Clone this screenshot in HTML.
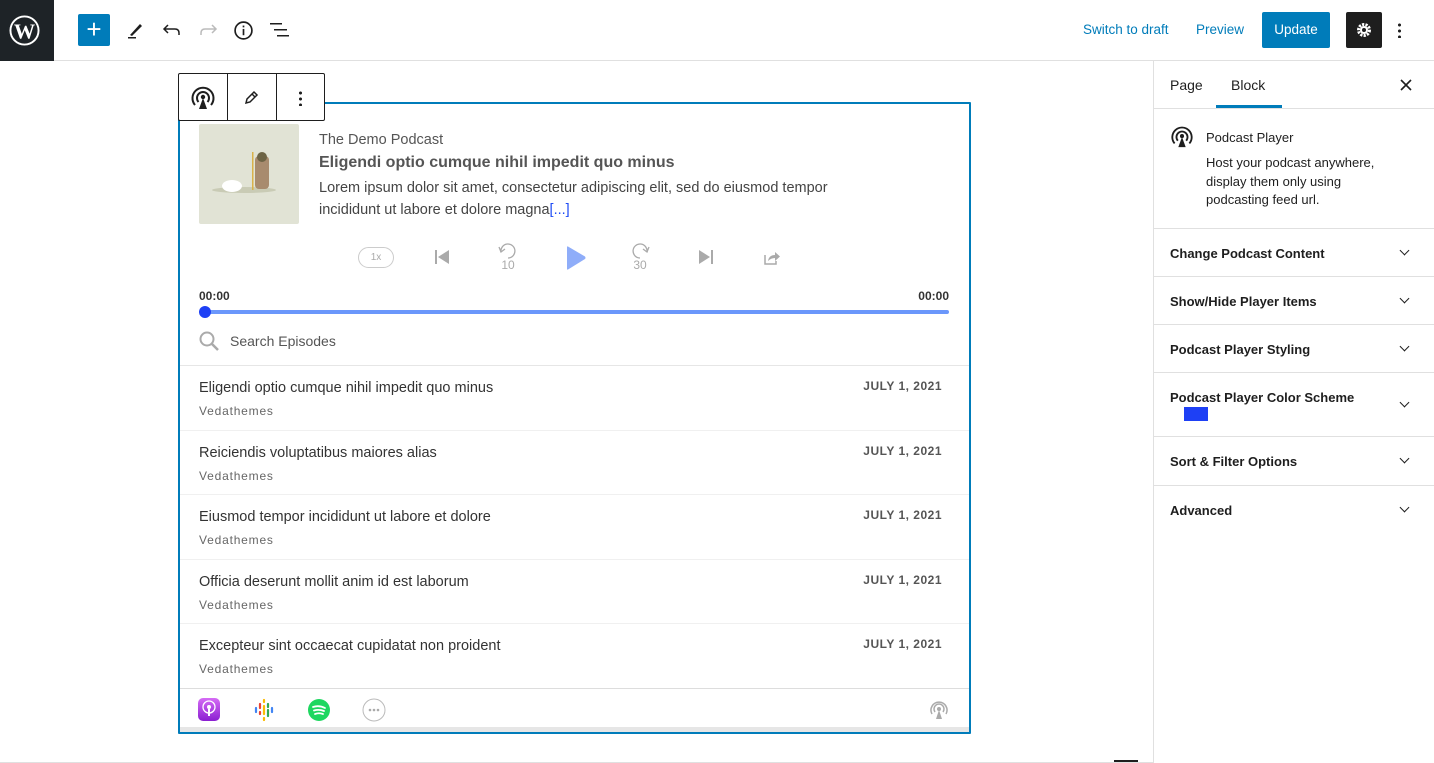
<!DOCTYPE html>
<html><head><meta charset="utf-8"><style>
*{box-sizing:border-box;margin:0;padding:0}
body{width:1434px;height:763px;overflow:hidden;background:#fff;font-family:"Liberation Sans",sans-serif;color:#1e1e1e;position:relative}
.abs{position:absolute}
.top{position:absolute;left:0;top:0;width:1434px;height:61px;border-bottom:1px solid #e0e0e0}
.side{position:absolute;left:1153px;top:61px;width:281px;height:702px;border-left:1px solid #e0e0e0}
.panel{position:absolute;left:0;width:281px;border-bottom:1px solid #e0e0e0;font-size:13px;font-weight:bold;color:#1e1e1e}
.panel span{position:absolute;left:16px}
.chev{position:absolute;right:27px;width:7px;height:7px;border-right:1.5px solid #1e1e1e;border-bottom:1.5px solid #1e1e1e;transform:rotate(45deg)}
.row{position:absolute;left:0;width:790px;height:64.5px;border-bottom:1px solid #f0f0f0}
.row .t{position:absolute;left:19px;top:14px;font-size:14.5px;color:#333}
.row .a{position:absolute;left:19px;top:38px;font-size:12px;color:#666;letter-spacing:.8px}
.row .d{position:absolute;right:28px;top:13px;font-size:12px;font-weight:bold;color:#555;letter-spacing:.5px}
</style></head><body>
<div class="top">
  <div class="abs" style="left:0;top:0;width:54px;height:61px;background:#1e2327">
    <svg class="abs" style="left:9px;top:15px" width="31" height="31" viewBox="0 0 32 32"><circle cx="16" cy="16" r="14.5" fill="none" stroke="#fff" stroke-width="2"/><text x="16" y="24" font-family="Liberation Serif" font-size="22" font-weight="bold" fill="#fff" text-anchor="middle">W</text></svg>
  </div>
  <div class="abs" style="left:78px;top:14px;width:32px;height:32px;background:#007cba;border-radius:2px;color:#fff;font-size:26px;line-height:30px;text-align:center">+</div>
  <svg class="abs" style="left:126px;top:20px" width="20" height="20" viewBox="0 0 20 20"><path d="M4 15 L14 4 L16 6 L6 16 Z" fill="#1e1e1e"/><rect x="2" y="17" width="8" height="1.5" fill="#1e1e1e"/></svg>
  <svg class="abs" style="left:162px;top:20px" width="20" height="20" viewBox="0 0 20 20"><path d="M6 5 L2 9 L6 13 M2 9 H13 Q17 9 17 13 V15" fill="none" stroke="#1e1e1e" stroke-width="1.5"/></svg>
  <svg class="abs" style="left:198px;top:20px" width="20" height="20" viewBox="0 0 20 20"><path d="M14 5 L18 9 L14 13 M18 9 H7 Q3 9 3 13 V15" fill="none" stroke="#bbb" stroke-width="1.5"/></svg>
  <svg class="abs" style="left:233px;top:20px" width="21" height="21" viewBox="0 0 20 20"><circle cx="10" cy="10" r="8" fill="none" stroke="#1e1e1e" stroke-width="1.6"/><rect x="9.2" y="8.5" width="1.6" height="6" fill="#1e1e1e"/><rect x="9.2" y="5.3" width="1.6" height="1.7" fill="#1e1e1e"/></svg>
  <svg class="abs" style="left:270px;top:22px" width="20" height="16" viewBox="0 0 20 16"><rect x="0" y="1" width="12" height="1.5" fill="#1e1e1e"/><rect x="4" y="7" width="13" height="1.5" fill="#1e1e1e"/><rect x="7" y="13" width="12" height="1.5" fill="#1e1e1e"/></svg>
  <div class="abs" style="left:1083px;top:22px;font-size:13.5px;color:#007cba">Switch to draft</div>
  <div class="abs" style="left:1196px;top:22px;font-size:13.5px;color:#007cba">Preview</div>
  <div class="abs" style="left:1262px;top:12px;width:68px;height:36px;background:#007cba;border-radius:2px;color:#fff;font-size:13.5px;line-height:36px;text-align:center">Update</div>
  <div class="abs" style="left:1346px;top:12px;width:36px;height:36px;background:#1e1e1e;border-radius:2px">
    <svg class="abs" style="left:9px;top:9px" width="18" height="18" viewBox="0 0 18 18"><circle cx="9" cy="9" r="5.5" fill="none" stroke="#fff" stroke-width="3" stroke-dasharray="2.2 1.2"/><circle cx="9" cy="9" r="4" fill="#fff"/><circle cx="9" cy="9" r="2" fill="#1e1e1e"/></svg>
  </div>
  <div class="abs" style="left:1398px;top:22px;width:3px;height:16px;background:radial-gradient(circle,#1e1e1e 1.4px,transparent 1.6px) 0 0/3px 6px"></div>
</div>

<div class="abs" style="left:178px;top:102px;width:793px;height:632px;border:2px solid #007cba;border-radius:1px"></div>
<div class="abs" style="left:180px;top:104px;width:789px;height:628px;overflow:hidden">
  <div class="abs" style="left:19px;top:20px;width:100px;height:100px;background:#e1e3d5;border-radius:2px">
    <svg width="100" height="100" viewBox="0 0 100 100"><ellipse cx="45" cy="66" rx="32" ry="3" fill="#c9cbb5"/><ellipse cx="33" cy="62" rx="10" ry="6" fill="#fff"/><rect x="56" y="32" width="14" height="33" rx="4" fill="#a88b6e"/><circle cx="63" cy="33" r="5" fill="#6d6445"/><rect x="53" y="28" width="1.5" height="38" fill="#d9b24a"/></svg>
  </div>
  <div class="abs" style="left:139px;top:28px;font-size:14.5px;color:#555">The Demo Podcast</div>
  <div class="abs" style="left:139px;top:50px;font-size:16px;font-weight:bold;color:#555">Eligendi optio cumque nihil impedit quo minus</div>
  <div class="abs" style="left:139px;top:73px;font-size:14.5px;color:#444;line-height:22px;width:560px">Lorem ipsum dolor sit amet, consectetur adipiscing elit, sed do eiusmod tempor incididunt ut labore et dolore magna<span style="color:#1e4bf5">[...]</span></div>
  <div class="abs" style="left:178px;top:143px;width:36px;height:21px;border:1.3px solid #ccc;border-radius:11px;font-size:10px;color:#aaa;text-align:center;line-height:19px">1x</div>
  <svg class="abs" style="left:253px;top:144px" width="18" height="18" viewBox="0 0 18 18"><rect x="2" y="2" width="2" height="14" fill="#aaa"/><path d="M16 2 V16 L5 9 Z" fill="#aaa"/></svg>
  <svg class="abs" style="left:316px;top:138px" width="24" height="28" viewBox="0 0 24 28"><path d="M5 10 A7 7 0 1 1 12 16" fill="none" stroke="#aaa" stroke-width="1.3"/><path d="M3 5 L5 10 L9 7" fill="none" stroke="#aaa" stroke-width="1.3"/><text x="12" y="27" font-size="12" fill="#aaa" text-anchor="middle" font-family="Liberation Sans">10</text></svg>
  <svg class="abs" style="left:385px;top:142px" width="22" height="24" viewBox="0 0 22 24"><path d="M2 1 Q2 0 3 0.5 L20 10.5 Q21 12 20 13 L3 23.5 Q2 24 2 23 Z" fill="#8fadf9"/></svg>
  <svg class="abs" style="left:448px;top:138px" width="24" height="28" viewBox="0 0 24 28"><path d="M19 10 A7 7 0 1 0 12 16" fill="none" stroke="#aaa" stroke-width="1.3"/><path d="M21 5 L19 10 L15 7" fill="none" stroke="#aaa" stroke-width="1.3"/><text x="12" y="27" font-size="12" fill="#aaa" text-anchor="middle" font-family="Liberation Sans">30</text></svg>
  <svg class="abs" style="left:517px;top:144px" width="18" height="18" viewBox="0 0 18 18"><path d="M2 2 V16 L13 9 Z" fill="#aaa"/><rect x="14" y="2" width="2" height="14" fill="#aaa"/></svg>
  <svg class="abs" style="left:583px;top:145px" width="18" height="17" viewBox="0 0 18 17"><path d="M2 6 V15 H13 V12" fill="none" stroke="#aaa" stroke-width="1.5"/><path d="M5 12 Q6 6 12 6 V3 L17 7.5 L12 12 V9 Q8 9 5 12Z" fill="#aaa"/></svg>
  <div class="abs" style="left:19px;top:185px;font-size:12px;font-weight:bold;color:#333">00:00</div>
  <div class="abs" style="right:20px;top:185px;font-size:12px;font-weight:bold;color:#333">00:00</div>
  <div class="abs" style="left:20px;top:206px;width:749px;height:4px;background:#6b97fb;border-radius:2px"></div>
  <div class="abs" style="left:19px;top:202px;width:12px;height:12px;background:#1e40f5;border-radius:50%"></div>
  <svg class="abs" style="left:18px;top:226px" width="22" height="22" viewBox="0 0 22 22"><circle cx="9" cy="9" r="6.5" fill="none" stroke="#aaa" stroke-width="2"/><path d="M14 14 L20 20" stroke="#aaa" stroke-width="2.5"/></svg>
  <div class="abs" style="left:50px;top:229px;font-size:14px;color:#555">Search Episodes</div>
  <div class="abs" style="left:0;top:261px;width:790px;height:1px;background:#e6e6e6"></div>
  <div class="abs" style="left:0;top:262px">
    <div class="row" style="top:0"><div class="t">Eligendi optio cumque nihil impedit quo minus</div><div class="a">Vedathemes</div><div class="d">JULY 1, 2021</div></div>
    <div class="row" style="top:64.5px"><div class="t">Reiciendis voluptatibus maiores alias</div><div class="a">Vedathemes</div><div class="d">JULY 1, 2021</div></div>
    <div class="row" style="top:129px"><div class="t">Eiusmod tempor incididunt ut labore et dolore</div><div class="a">Vedathemes</div><div class="d">JULY 1, 2021</div></div>
    <div class="row" style="top:193.5px"><div class="t">Officia deserunt mollit anim id est laborum</div><div class="a">Vedathemes</div><div class="d">JULY 1, 2021</div></div>
    <div class="row" style="top:258px;border-bottom:1px solid #ddd"><div class="t">Excepteur sint occaecat cupidatat non proident</div><div class="a">Vedathemes</div><div class="d">JULY 1, 2021</div></div>
  </div>
  <div class="abs" style="left:0;top:623px;width:790px;height:5px;background:#e6e6e6"></div>
  <div class="abs" style="left:18px;top:594px;width:22px;height:23px;border-radius:5px;background:linear-gradient(#d56bf5,#8a1fd1)">
    <svg width="22" height="23" viewBox="0 0 22 23"><circle cx="11" cy="9" r="6" fill="none" stroke="#fff" stroke-width="1.3"/><circle cx="11" cy="9" r="2" fill="#fff"/><rect x="10" y="11" width="2" height="7" fill="#fff"/></svg>
  </div>
  <svg class="abs" style="left:72px;top:594px" width="24" height="24" viewBox="0 0 24 24"><g stroke-linecap="round" stroke-width="2.2"><path d="M12 2V4M12 8V16M12 20V22" stroke="#fbbc04"/><path d="M8 6V10M8 14V16" stroke="#ea4335"/><path d="M16 6V9M16 12V18" stroke="#34a853"/><path d="M4 10V14" stroke="#4285f4"/><path d="M20 10V14" stroke="#4285f4"/></g></svg>
  <svg class="abs" style="left:127px;top:594px" width="24" height="24" viewBox="0 0 24 24"><circle cx="12" cy="12" r="11" fill="#1ed760"/><path d="M6 9 Q12 7 18 10 M7 12.5 Q12 11 17 13 M8 16 Q12 14.5 16 16" stroke="#fff" stroke-width="1.8" fill="none" stroke-linecap="round"/></svg>
  <svg class="abs" style="left:182px;top:594px" width="24" height="24" viewBox="0 0 24 24"><circle cx="12" cy="12" r="11" fill="none" stroke="#bbb" stroke-width="1"/><circle cx="8" cy="12" r="1.3" fill="#aaa"/><circle cx="12" cy="12" r="1.3" fill="#aaa"/><circle cx="16" cy="12" r="1.3" fill="#aaa"/></svg>
  <svg class="abs" style="left:748px;top:595px" width="22" height="22" viewBox="0 0 22 22"><path d="M4 15 A8 8 0 1 1 18 15" fill="none" stroke="#aaa" stroke-width="1.5"/><path d="M7 13 A5 5 0 1 1 15 13" fill="none" stroke="#aaa" stroke-width="1.5"/><circle cx="11" cy="10" r="2" fill="#aaa"/><path d="M11 11 L14 20 H8 Z" fill="#aaa"/></svg>
</div>

<div class="abs" style="left:178px;top:73px;width:147px;height:48px;border:1px solid #1e1e1e;background:#fff;border-radius:2px">
  <div class="abs" style="left:48px;top:0;width:1px;height:46px;background:#1e1e1e"></div>
  <div class="abs" style="left:97px;top:0;width:1px;height:46px;background:#1e1e1e"></div>
  <svg class="abs" style="left:11px;top:11px" width="26" height="26" viewBox="0 0 26 26"><path d="M5 20 A10.5 10.5 0 1 1 21 20" fill="none" stroke="#1e1e1e" stroke-width="2"/><path d="M8.5 17 A6 6 0 1 1 17.5 17" fill="none" stroke="#1e1e1e" stroke-width="2"/><circle cx="13" cy="12" r="2.2" fill="#1e1e1e"/><path d="M13 13 L17 24 H9 Z" fill="#1e1e1e"/></svg>
  <svg class="abs" style="left:64px;top:16px" width="16" height="16" viewBox="0 0 16 16"><path d="M3 13 L4 9 L11 2 L14 5 L7 12 Z" fill="none" stroke="#1e1e1e" stroke-width="1.5"/><path d="M9 4 L12 7" stroke="#1e1e1e" stroke-width="1.5"/></svg>
  <div class="abs" style="left:120px;top:16px;width:3px;height:16px;background:radial-gradient(circle,#1e1e1e 1.4px,transparent 1.6px) 0 0/3px 6px"></div>
</div>

<div class="abs" style="left:1114px;top:760px;width:24px;height:2px;background:#1e1e1e"></div>
<div class="abs" style="left:0;top:762px;width:1153px;height:1px;background:#e0e0e0"></div>

<div class="side">
  <div class="abs" style="left:0;top:0;width:281px;height:48px;border-bottom:1px solid #e0e0e0"></div>
  <div class="abs" style="left:16px;top:16px;font-size:14px">Page</div>
  <div class="abs" style="left:77px;top:16px;font-size:14px">Block</div>
  <div class="abs" style="left:62px;top:44px;width:66px;height:3px;background:#007cba"></div>
  <svg class="abs" style="left:246px;top:18px" width="12" height="12" viewBox="0 0 12 12"><path d="M1 1 L11 11 M11 1 L1 11" stroke="#1e1e1e" stroke-width="1.6"/></svg>
  <svg class="abs" style="left:16px;top:64px" width="24" height="24" viewBox="0 0 26 26"><path d="M5 20 A10.5 10.5 0 1 1 21 20" fill="none" stroke="#1e1e1e" stroke-width="2"/><path d="M8.5 17 A6 6 0 1 1 17.5 17" fill="none" stroke="#1e1e1e" stroke-width="2"/><circle cx="13" cy="12" r="2.2" fill="#1e1e1e"/><path d="M13 13 L17 24 H9 Z" fill="#1e1e1e"/></svg>
  <div class="abs" style="left:52px;top:69px;font-size:13px">Podcast Player</div>
  <div class="abs" style="left:52px;top:93px;font-size:13px;line-height:18.5px;width:200px">Host your podcast anywhere, display them only using podcasting feed url.</div>
  <div class="panel" style="top:0;height:168px"></div>
  <div class="panel" style="top:168px;height:48px"><span style="top:17px">Change Podcast Content</span><div class="chev" style="top:18px"></div></div>
  <div class="panel" style="top:216px;height:48px"><span style="top:17px">Show/Hide Player Items</span><div class="chev" style="top:18px"></div></div>
  <div class="panel" style="top:264px;height:48px"><span style="top:17px">Podcast Player Styling</span><div class="chev" style="top:18px"></div></div>
  <div class="panel" style="top:312px;height:64px"><span style="top:17px">Podcast Player Color Scheme</span><div class="abs" style="left:30px;top:34px;width:24px;height:14px;background:#1e40f5"></div><div class="chev" style="top:26px"></div></div>
  <div class="panel" style="top:376px;height:49px"><span style="top:17px">Sort &amp; Filter Options</span><div class="chev" style="top:18px"></div></div>
  <div class="panel" style="top:425px;height:49px;border-bottom:none"><span style="top:17px">Advanced</span><div class="chev" style="top:18px"></div></div>
</div>
</body></html>
